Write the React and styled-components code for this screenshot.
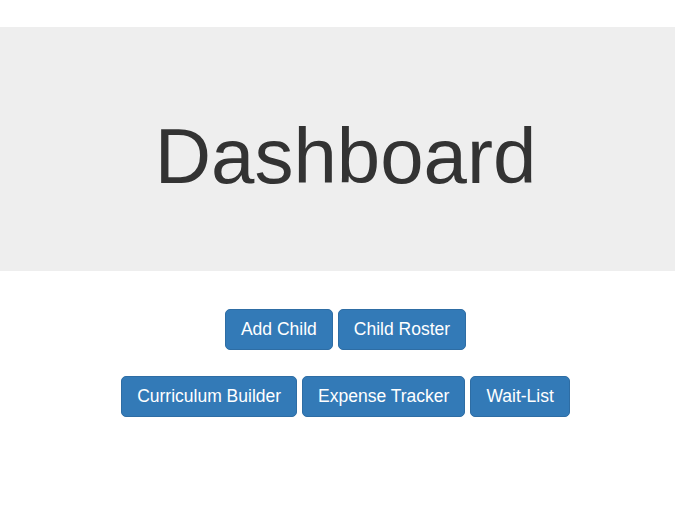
import React from "react";
import styled, { createGlobalStyle } from "styled-components";

const GlobalStyle = createGlobalStyle`
  body {
    margin: 0;
    font-family: "Liberation Sans", Arial, sans-serif;
    color: #333;
    background: #fff;
  }
`;

const Page = styled.div`
  padding-top: 27px;
`;

const Jumbotron = styled.div`
  background: #eee;
  height: 244px;
  box-sizing: border-box;
  padding: 16px 0 0 16px;
  display: flex;
  align-items: center;
  justify-content: center;
`;

const Title = styled.h1`
  margin: 0;
  font-size: 78px;
  font-weight: 400;
  line-height: 1.1;
  color: #333;
`;

const Actions = styled.div`
  display: flex;
  flex-direction: column;
  align-items: center;
  gap: 26px;
  padding: 38px 0 0 16px;
`;

const Row = styled.div`
  display: flex;
  justify-content: center;
  gap: 5px;
`;

const Button = styled.button`
  font-family: "Liberation Sans", Arial, sans-serif;
  font-size: 17.5px;
  line-height: 25px;
  padding: 7px 15px;
  color: #fff;
  background: #337ab7;
  border: 1px solid #2e6da4;
  border-radius: 5px;
  cursor: pointer;
`;

const rows = [
  ["Add Child", "Child Roster"],
  ["Curriculum Builder", "Expense Tracker", "Wait-List"],
];

export default function App() {
  return (
    <>
      <GlobalStyle />
      <Page>
        <Jumbotron>
          <Title>Dashboard</Title>
        </Jumbotron>
        <Actions>
          {rows.map((row, i) => (
            <Row key={i}>
              {row.map((label) => (
                <Button key={label}>{label}</Button>
              ))}
            </Row>
          ))}
        </Actions>
      </Page>
    </>
  );
}
